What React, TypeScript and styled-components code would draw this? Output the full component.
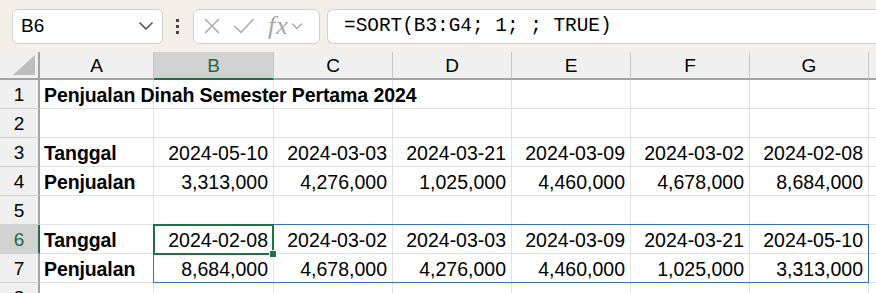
import styled, { createGlobalStyle } from "styled-components";

const GlobalStyle = createGlobalStyle`
  html, body {
    margin: 0;
    padding: 0;
    background: #ffffff;
    overflow: hidden;
  }
`;

const Page = styled.div`
  width: 876px;
  height: 293px;
  overflow: hidden;
  font-family: "Liberation Sans", Arial, sans-serif;
  color: #000;
`;

const TopBar = styled.div`
  display: flex;
  align-items: center;
  height: 52px;
  padding: 0 0 0 12px;
  background: #f4efe9;
  box-sizing: border-box;
`;

const Box = styled.div`
  display: flex;
  align-items: center;
  height: 35px;
  box-sizing: border-box;
  background: #fff;
  border: 1px solid #d3d0cc;
  border-radius: 6px;
`;

const NameBox = styled(Box)`
  width: 151px;
  padding: 0 8px 0 8px;
  justify-content: space-between;
  font-size: 19px;
`;

const Dots = styled.div`
  display: flex;
  flex-direction: column;
  gap: 3px;
  margin: 0 14px 0 13px;
  span {
    width: 3px;
    height: 3px;
    background: #444;
  }
`;

const FxBox = styled(Box)`
  width: 127px;
  padding: 0 6px 0 9px;
  gap: 12px;
  color: #a6a6a6;
`;

const FxText = styled.span`
  font-family: "Liberation Serif", serif;
  font-style: italic;
  font-size: 26px;
  line-height: 1;
  margin-left: 1px;
  letter-spacing: 1px;
`;

const FormulaBox = styled(Box)`
  flex: 1;
  margin-left: 7px;
  border-right: none;
  border-radius: 6px 0 0 6px;
  padding-left: 16px;
  font-family: "Liberation Mono", monospace;
  font-size: 19.4px;
`;

const Sheet = styled.div`
  display: grid;
  grid-template-columns: 40px 114px 120px 119px 119px 119px 119px 119px 1fr;
  grid-template-rows: 28px repeat(8, 29px);
`;

const Cell = styled.div<{ $row: number; $col: number; $align?: "left" | "right"; $bold?: boolean }>`
  grid-row: ${(p) => p.$row};
  grid-column: ${(p) => p.$col};
  display: flex;
  align-items: center;
  justify-content: ${(p) => (p.$align === "right" ? "flex-end" : "flex-start")};
  padding: 2px 5px 0 4px;
  border-right: 1px solid #e1e1e1;
  border-bottom: 1px solid #e1e1e1;
  font-size: 19.5px;
  font-weight: ${(p) => (p.$bold ? 700 : 400)};
  letter-spacing: ${(p) => (p.$bold ? "-0.1px" : "0")};
  white-space: nowrap;
  overflow: visible;
  min-width: 0;
  position: relative;
  z-index: ${(p) => (p.$bold ? 1 : 0)};
`;

const ColHead = styled.div<{ $col: number; $active?: boolean }>`
  grid-row: 1;
  grid-column: ${(p) => p.$col};
  display: flex;
  align-items: center;
  justify-content: center;
  font-size: 19px;
  background: ${(p) => (p.$active ? "#d2d2d2" : "#f0f0f0")};
  color: ${(p) => (p.$active ? "#1d6b3f" : "#000")};
  border-right: 1px solid #c6c6c6;
  border-bottom: ${(p) => (p.$active ? "2px solid #1f7145" : "2px solid #a3a3a3")};
  padding-top: 1px;
`;

const RowHead = styled.div<{ $row: number; $active?: boolean }>`
  grid-row: ${(p) => p.$row};
  grid-column: 1;
  display: flex;
  align-items: center;
  justify-content: center;
  font-size: 19px;
  padding-top: 2px;
  background: ${(p) => (p.$active ? "#d2d2d2" : "#f0f0f0")};
  color: ${(p) => (p.$active ? "#1d6b3f" : "#000")};
  border-right: ${(p) => (p.$active ? "2px solid #1f7145" : "2px solid #a3a3a3")};
  border-bottom: 1px solid #d0d0d0;
`;

const Corner = styled.div`
  grid-row: 1;
  grid-column: 1;
  background: #f0f0f0;
  border-right: 2px solid #a3a3a3;
  border-bottom: 2px solid #a3a3a3;
  display: flex;
  align-items: flex-end;
  justify-content: flex-end;
  padding: 0 3px 3px 0;
`;

const SpillRange = styled.div`
  grid-column: 3 / 9;
  grid-row: 7 / 9;
  margin: -1px 0 0 -1px;
  border: 1px solid #3a6fc7;
  pointer-events: none;
  z-index: 2;
`;

const ActiveCell = styled.div`
  grid-column: 3 / 4;
  grid-row: 7 / 8;
  margin: -1px 0 -1px -1px;
  border: 2px solid #1f7145;
  position: relative;
  pointer-events: none;
  z-index: 3;
`;

const FillHandle = styled.span`
  position: absolute;
  right: -5px;
  bottom: -5px;
  width: 6px;
  height: 6px;
  background: #1f7145;
  border: 1px solid #fff;
`;

const cols = ["A", "B", "C", "D", "E", "F", "G", ""];

const rows: string[][] = [
  ["Penjualan Dinah Semester Pertama 2024", "", "", "", "", "", "", ""],
  ["", "", "", "", "", "", "", ""],
  ["Tanggal", "2024-05-10", "2024-03-03", "2024-03-21", "2024-03-09", "2024-03-02", "2024-02-08", ""],
  ["Penjualan", "3,313,000", "4,276,000", "1,025,000", "4,460,000", "4,678,000", "8,684,000", ""],
  ["", "", "", "", "", "", "", ""],
  ["Tanggal", "2024-02-08", "2024-03-02", "2024-03-03", "2024-03-09", "2024-03-21", "2024-05-10", ""],
  ["Penjualan", "8,684,000", "4,678,000", "4,276,000", "4,460,000", "1,025,000", "3,313,000", ""],
  ["", "", "", "", "", "", "", ""],
];

export default function App() {
  return (
    <Page>
      <GlobalStyle />
      <TopBar>
        <NameBox>
          <span>B6</span>
          <svg width="16" height="10" viewBox="0 0 16 10">
            <path d="M1.5 1.5 L8 8 L14.5 1.5" fill="none" stroke="#444" strokeWidth="1.4" />
          </svg>
        </NameBox>
        <Dots>
          <span />
          <span />
          <span />
        </Dots>
        <FxBox>
          <svg width="18" height="18" viewBox="0 0 18 18">
            <path d="M2 2 L16 16 M16 2 L2 16" stroke="#a6a6a6" strokeWidth="1.4" />
          </svg>
          <svg width="22" height="18" viewBox="0 0 22 18">
            <path d="M1.5 9 L8 15.5 L20.5 2" fill="none" stroke="#a6a6a6" strokeWidth="1.4" />
          </svg>
          <FxText>fx</FxText>
          <svg width="12" height="8" viewBox="0 0 12 8" style={{ marginLeft: -10 }}>
            <path d="M1 1.5 L6 6.5 L11 1.5" fill="none" stroke="#a6a6a6" strokeWidth="1.3" />
          </svg>
        </FxBox>
        <FormulaBox>=SORT(B3:G4; 1; ; TRUE)</FormulaBox>
      </TopBar>
      <Sheet>
        <Corner>
          <svg width="22" height="20" viewBox="0 0 22 20">
            <path d="M22 0 L22 20 L0 20 Z" fill="#bdbdbd" />
          </svg>
        </Corner>
        {cols.map((c, i) => (
          <ColHead key={i} $col={i + 2} $active={c === "B"}>
            {c}
          </ColHead>
        ))}
        {rows.map((cells, r) => [
          <RowHead key={`h${r}`} $row={r + 2} $active={r === 5}>
            {r + 1}
          </RowHead>,
          ...cells.map((v, i) => (
            <Cell
              key={`${r}-${i}`}
              $row={r + 2}
              $col={i + 2}
              $align={i === 0 ? "left" : "right"}
              $bold={i === 0}
            >
              {v}
            </Cell>
          )),
        ])}
        <SpillRange />
        <ActiveCell>
          <FillHandle />
        </ActiveCell>
      </Sheet>
    </Page>
  );
}
